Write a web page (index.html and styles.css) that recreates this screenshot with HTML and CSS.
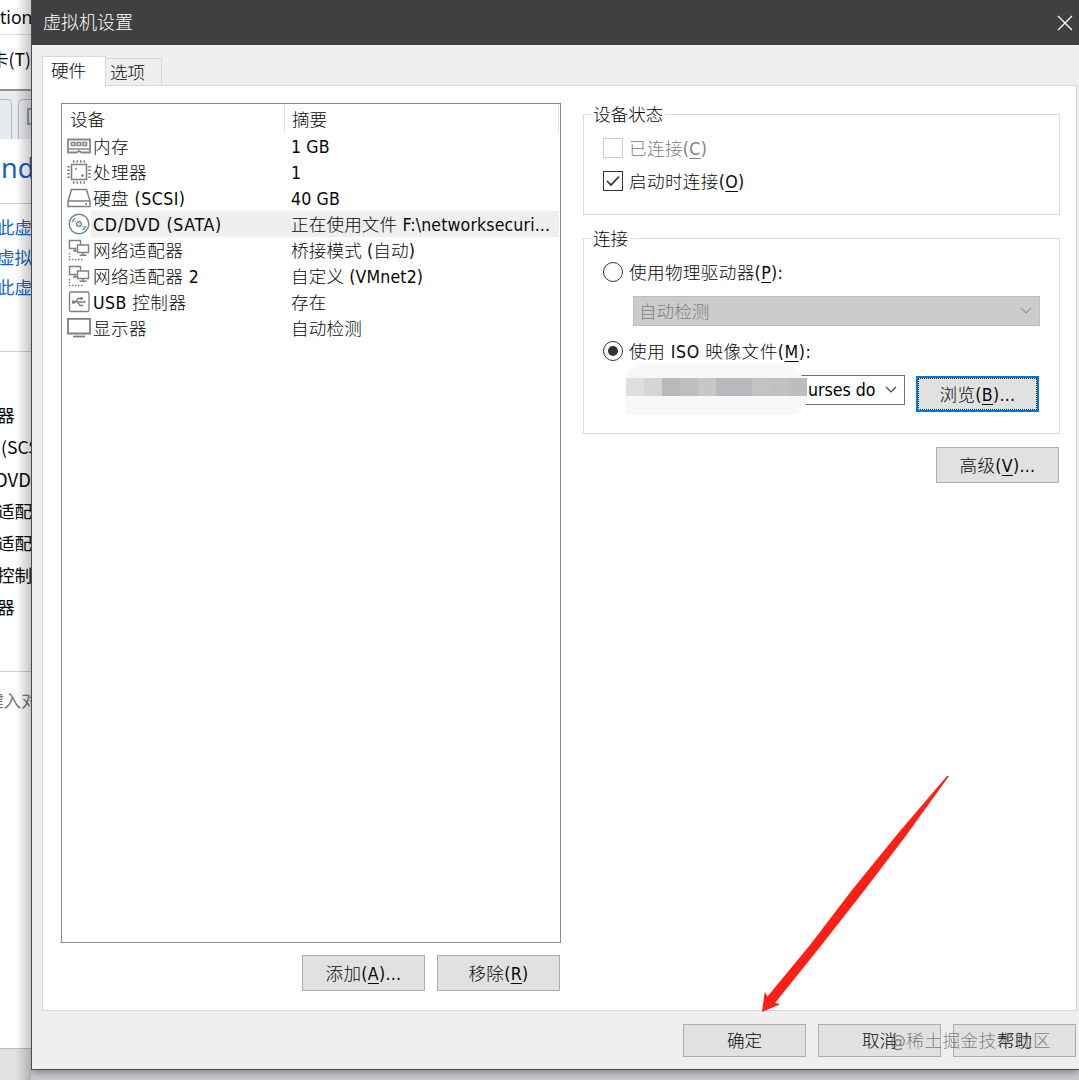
FILE: index.html
```html
<!DOCTYPE html>
<html lang="zh-CN">

<head>
  <meta charset="UTF-8" />
  <title>虚拟机设置</title>
  <link rel="stylesheet" href="styles.css">
</head>

<body>
  <!-- main window behind the dialog -->
  <div class="backdrop">
    <div class="bg-title">tion</div>
    <div class="bg-menu">卡(T)</div>
    <div class="bg-tabs"><i class="bg-tab first"></i><i class="bg-tab"><b></b></i></div>
    <div class="bg-name">nd</div>
    <div class="bg-links">
      <span>此虚</span>
      <span>虚拟</span>
      <span>此虚</span>
    </div>
    <div class="bg-devices">
      <span>器</span>
      <span class="lat">(SCS</span>
      <span class="dvd">DVD</span>
      <span>适配</span>
      <span>适配</span>
      <span>控制</span>
      <span>器</span>
    </div>
    <div class="bg-note"><span>键入对</span></div>
    <div class="bg-status"></div>
  </div>

  <div class="dialog">
    <div class="titlebar">
      <span>虚拟机设置</span>
      <svg width="16" height="16" viewBox="0 0 16 16"><path d="M1 1L15 15M15 1L1 15" stroke="#fff" stroke-width="1.3" /></svg>
    </div>

    <div class="tabs">
      <div class="tab active">硬件</div>
      <div class="tab">选项</div>
    </div>

    <div class="panel">
      <div class="left">
        <div class="list">
          <div class="head"><span>设备</span><span>摘要</span></div>
          <div class="row">
            <svg class="icon" viewBox="0 0 24 24" fill="none" stroke="#85888b" stroke-width="1.8"><path d="M1 5.500H23V18.500H14.500L12 17L9.500 18.500H1Z" /><path d="M1 15H23" stroke-width="1.500" /><path d="M4.500 8.500H8V11.500H4.500ZM10.300 8.500H13.700V11.500H10.300ZM16 8.500H19.500V11.500H16Z" stroke-width="1.600" /></svg>
            <span class="name">内存</span><span class="sum">1 GB</span>
          </div>
          <div class="row">
            <svg class="icon" viewBox="0 0 24 24" fill="none" stroke="#7d8082" stroke-width="1.600"><path d="M4.500 4.500H19.500V19.500H4.500Z" /><path d="M6 1.500H18M6 22.500H18" stroke-width="2.600" stroke-dasharray="1.500 2" /><path d="M1.500 6V18M22.500 6V18" stroke-width="2.600" stroke-dasharray="1.500 2" /><circle cx="9" cy="9" r="1" fill="#7d8082" stroke="none" /><circle cx="15.500" cy="15.500" r="1.300" fill="#7d8082" stroke="none" /></svg>
            <span class="name">处理器</span><span class="sum">1</span>
          </div>
          <div class="row">
            <svg class="icon" viewBox="0 0 24 24" fill="none" stroke="#7d8082" stroke-width="1.500"><path d="M4.500 3.500H19.500L23 15V20.500H1V15Z M1 15H23" /><path d="M18 18H20" /></svg>
            <span class="name">硬盘 (SCSI)</span><span class="sum">40 GB</span>
          </div>
          <div class="row selected">
            <svg class="icon" viewBox="0 0 24 24" fill="none" stroke="#6f8798" stroke-width="1.400"><circle cx="12" cy="12" r="9.800" /><circle cx="12" cy="12" r="2.400" /><circle cx="12" cy="12" r=".7" fill="#6f8798" stroke="none" /><path d="M5.300 10A7 7 0 0 1 8.500 6M18.700 14A7 7 0 0 1 15.500 18" /><path d="M7.800 10A4.600 4.600 0 0 1 9.300 8.200M16.200 14A4.600 4.600 0 0 1 14.700 15.800" stroke-width="1" /></svg>
            <span class="name">CD/DVD (SATA)</span><span class="sum">正在使用文件 F:\networksecuri...</span>
          </div>
          <div class="row">
            <svg class="icon" viewBox="0 0 24 24" fill="none" stroke="#7d8082" stroke-width="1.400"><path d="M9.500 10.500H2.500V2.500H13.500V6.500M6 13H10M8 10.500V13" /><path d="M10.500 7H21.500V14.500H10.500ZM16 14.500V17M12.500 17.200H19.500" /><path d="M2.500 15V21.500H16.500" stroke-dasharray="1.500 1.500" /></svg>
            <span class="name">网络适配器</span><span class="sum">桥接模式 (自动)</span>
          </div>
          <div class="row">
            <svg class="icon" viewBox="0 0 24 24" fill="none" stroke="#7d8082" stroke-width="1.400"><path d="M9.500 10.500H2.500V2.500H13.500V6.500M6 13H10M8 10.500V13" /><path d="M10.500 7H21.500V14.500H10.500ZM16 14.500V17M12.500 17.200H19.500" /><path d="M2.500 15V21.500H16.500" stroke-dasharray="1.500 1.500" /></svg>
            <span class="name">网络适配器 2</span><span class="sum">自定义 (VMnet2)</span>
          </div>
          <div class="row">
            <svg class="icon" viewBox="0 0 24 24" fill="none" stroke="#7d8082" stroke-width="1.300"><rect x="2.500" y="2" width="19.500" height="19.500" rx="1.500" /><path d="M6 12H18M8.500 12L11 8.500H14M10.500 12L13 15.500H15" /><circle cx="6.500" cy="12" r="1.200" fill="#7d8082" /><circle cx="14.500" cy="8.500" r=".8" fill="#7d8082" /><path d="M14.500 14.700H16V16.200H14.500ZM17 10.500L19 12L17 13.500Z" fill="#7d8082" stroke="none" /></svg>
            <span class="name">USB 控制器</span><span class="sum">存在</span>
          </div>
          <div class="row">
            <svg class="icon" viewBox="0 0 24 24" fill="none" stroke="#7d8082" stroke-width="1.800"><path d="M1 2.800H23V17.500H1Z" /><path d="M6 20.500H18" stroke-width="1.800" /></svg>
            <span class="name">显示器</span><span class="sum">自动检测</span>
          </div>
        </div>
        <div class="actions">
          <button>添加(<u>A</u>)...</button>
          <button>移除(<u>R</u>)</button>
        </div>
      </div>

      <div class="right">
        <fieldset class="status">
          <legend>设备状态</legend>
          <label class="option disabled"><i class="check"></i><span>已连接(<u>C</u>)</span></label>
          <label class="option"><i class="check"><svg width="18" height="18" viewBox="0 0 18 18" fill="none"><path d="M3 9L7 13L15 4.500" stroke="#333" stroke-width="1.700" /></svg></i><span>启动时连接(<u>O</u>)</span></label>
        </fieldset>

        <fieldset class="connection">
          <legend>连接</legend>
          <label class="option"><i class="radio"></i><span>使用物理驱动器(<u>P</u>):</span></label>
          <div class="combo off">
            <span>自动检测</span>
            <svg width="12" height="8" viewBox="0 0 12 8" fill="none"><path d="M1 1L6 6L11 1" stroke="#999" stroke-width="1.200" /></svg>
          </div>
          <label class="option iso"><i class="radio on"></i><span>使用 ISO 映像文件(<u>M</u>):</span></label>
          <div class="file">
            <div class="combo">
              <div class="mask"><div class="mosaic"></div></div>
              <span class="path">urses do</span>
              <svg width="12" height="8" viewBox="0 0 12 8" fill="none"><path d="M1 1L6 6L11 1" stroke="#444" stroke-width="1.200" /></svg>
            </div>
            <button class="focused">浏览(<u>B</u>)...</button>
          </div>
        </fieldset>

        <button class="advanced">高级(<u>V</u>)...</button>
      </div>
    </div>

    <div class="footer">
      <button>确定</button>
      <button>取消</button>
      <button>帮助</button>
    </div>
  </div>

  <svg class="arrow" width="190" height="240" viewBox="0 0 190 240"><path d="M187 1H189L145 62L100 121L60 172L15.200 227.700L20 229.300L2 237L4.700 217L7.500 221.500L50 170L92 115L140 56Z" fill="#ff2015" /></svg>
  <div class="watermark">@稀土掘金技术社区</div>
</body>

</html>
```
FILE: styles.css
```css
* {
  box-sizing: border-box;
}

body {
  margin: 0;
  width: 1079px;
  height: 1080px;
  overflow: hidden;
  position: relative;
  display: flex;
  background: #c9cbce;
  font-family: "DejaVu Sans Condensed", "Noto Sans CJK SC", sans-serif;
  font-size: 17.6px;
  font-weight: 300;
  line-height: 26px;
  color: #080808;
  white-space: nowrap;
}

.backdrop {
  width: 31px;
  height: 1080px;
  flex: none;
  overflow: hidden;
  background: #fff;
  position: relative;
  font-family: "Noto Sans CJK SC", sans-serif;
  font-weight: 400;
}

/* dialog shadow falling on the window behind */
.backdrop::after {
  content: "";
  position: absolute;
  top: 0;
  right: 0;
  width: 15px;
  height: 100%;
  background: linear-gradient(to right, rgba(0, 0, 0, 0), rgba(0, 0, 0, 0.22));
}

.bg-title {
  height: 35px;
  line-height: 35px;
  font-family: "Noto Sans", sans-serif;
  border-bottom: 1px solid #ddd;
}

.bg-menu {
  height: 54px;
  line-height: 48px;
  display: flex;
  justify-content: flex-end;
}

.bg-tabs {
  height: 50px;
  border-top: 2px solid #8c9093;
  background: #e8ebed;
  display: flex;
  gap: 6px;
  padding-top: 8px;
}

.bg-tab {
  width: 30px;
  flex: none;
  border: 1px solid #b4b8ba;
  border-bottom: 0;
  border-radius: 5px 5px 0 0;
  padding: 8px;
}

.bg-tab.first {
  width: 12px;
  border-left: 0;
  border-radius: 0 5px 0 0;
  padding: 0;
}

.bg-tab b {
  display: block;
  width: 16px;
  height: 17px;
  border: 2px solid #999;
}

.bg-name {
  height: 65px;
  line-height: 57px;
  padding-left: 1px;
  font-family: "Noto Sans", sans-serif;
  font-size: 27px;
  color: #1160bd;
  border-bottom: 1px solid #ccc;
}

.bg-links {
  height: 148px;
  padding-top: 8px;
  line-height: 30px;
  border-bottom: 1px solid #ccc;
  color: #1766bb;
}

.bg-links span,
.bg-devices span {
  display: block;
  margin-left: -3px;
}

.bg-devices {
  height: 320px;
  padding-top: 47px;
  line-height: 32px;
  border-bottom: 1px solid #ccc;
}

.bg-devices .lat {
  margin-left: 1px;
}

.bg-devices .dvd {
  margin-left: -5px;
  font-size: 18.5px;
}

.bg-note {
  height: 376px;
  padding-top: 15px;
  color: #777;
}

.bg-note span {
  margin-left: -14px;
}

.bg-status {
  height: 32px;
  background: #dfe1e3;
  border-top: 1px solid #bbb;
}

.dialog {
  flex: 1;
  height: 1070px;
  display: flex;
  flex-direction: column;
  background: #efefef;
  border-left: 1px solid #4a4a4a;
  border-bottom: 1px solid #4a4a4a;
  box-shadow: 0 2px 9px rgba(0, 0, 0, 0.4);
}

.titlebar {
  height: 45px;
  flex: none;
  display: flex;
  justify-content: space-between;
  align-items: center;
  padding: 0 6px 0 11px;
  background: #404040;
  color: #fff;
  font-size: 18px;
  font-family: "Noto Sans CJK SC", sans-serif;
}

.titlebar span {
  padding-bottom: 3px;
}

.tabs {
  height: 41px;
  flex: none;
  display: flex;
  align-items: flex-end;
  padding-left: 10px;
  position: relative;
  z-index: 1;
  margin-bottom: -1px;
}

.tab {
  width: 56px;
  height: 28px;
  padding: 1px 0 0 4px;
  border: 1px solid #d9d9d9;
  border-left: 0;
}

.tab.active {
  width: 64px;
  height: 31px;
  padding: 1px 0 0 8px;
  margin-bottom: -1px;
  background: #fff;
  border-left: 1px solid #d9d9d9;
  border-bottom: 0;
}

.panel {
  margin: 0 2px 0 10px;
  height: 926px;
  display: flex;
  gap: 22px;
  padding: 17px 16px 0 18px;
  background: #fff;
  border: 1px solid #d9d9d9;
}

.left {
  width: 500px;
  flex: none;
}

.list {
  height: 840px;
  border: 1px solid #828790;
}

.head {
  height: 29px;
  line-height: 33px;
  display: flex;
  margin-right: 1px;
  border-right: 1px solid #e5e5e5;
}

.head span:first-child {
  width: 223px;
  padding-left: 8px;
  border-right: 1px solid #e5e5e5;
}

.head span:last-child {
  padding-left: 7px;
}

.row {
  height: 26px;
  display: flex;
  align-items: center;
  padding-left: 5px;
}

.icon {
  width: 24px;
  height: 24px;
  flex: none;
}

.name {
  width: 193px;
  padding-left: 2px;
  flex: none;
  letter-spacing: 0.45px;
}

.name,
.sum {
  height: 26px;
  line-height: 28px;
}

.sum {
  flex: 1;
  padding-left: 7px;
  margin-right: 1px;
  letter-spacing: 0.12px;
}

.selected .name,
.selected .sum {
  background: #efefef;
}

.selected .name {
  letter-spacing: 0.7px;
}

.actions {
  display: flex;
  justify-content: flex-end;
  gap: 12px;
  padding: 12px 1px 0 0;
}

button {
  width: 123px;
  height: 36px;
  padding: 2px 0 0;
  flex: none;
  border: 1px solid #adadad;
  background: #e1e1e1;
  color: #080808;
  font: inherit;
  letter-spacing: 0.3px;
}

u {
  text-decoration-thickness: 1px;
  text-underline-offset: 3px;
}

.right {
  width: 477px;
  flex: none;
  display: flex;
  flex-direction: column;
}

fieldset {
  margin: 0;
  min-width: 0;
  border: 1px solid #dcdcdc;
}

legend {
  height: 22px;
  padding: 0 2px;
  line-height: 24px;
}

.status {
  height: 112px;
  padding: 6px 19px 0 7px;
}

.connection {
  height: 207px;
  margin-top: 12px;
  padding: 6px 19px 0 7px;
}

.option {
  height: 33px;
  display: flex;
  align-items: center;
  padding-left: 12px;
  letter-spacing: 0.35px;
}

.option span {
  padding-top: 2px;
}

.iso {
  letter-spacing: 0.55px;
}

.disabled {
  color: #808080;
}

.check,
.radio {
  width: 20px;
  height: 20px;
  margin-right: 6px;
  border: 1px solid #333;
  display: flex;
  flex: none;
}

.disabled .check {
  border-color: #ccc;
}

.radio {
  border-radius: 50%;
  padding: 4px;
}

.radio.on::before {
  content: "";
  width: 10px;
  height: 10px;
  border-radius: 50%;
  background: #333;
}

.combo {
  width: 272px;
  height: 30px;
  display: flex;
  align-items: center;
  justify-content: space-between;
  border: 1px solid #707070;
  padding: 0 7px 0 5px;
  position: relative;
}

.combo.off {
  width: 407px;
  margin: 8px 0 8px 42px;
  color: #808080;
  background: #ccc;
  border-color: #bfbfbf;
}

.combo.off span {
  padding-top: 2px;
}

.path {
  margin-left: 169px;
  width: 68px;
  overflow: hidden;
  color: #000;
}

.file {
  display: flex;
  gap: 11px;
  padding: 8px 0 0 42px;
}

.file button {
  margin-top: 1px;
}

button.focused {
  border: 2px solid #0078d7;
  outline: 1px dotted #222;
  outline-offset: -3px;
}

/* censored part of the path */
.mask {
  position: absolute;
  left: -8px;
  top: -12px;
  width: 181px;
  height: 51px;
  padding-top: 14px;
  background: #f7f7f7;
  border-radius: 16px 28px 18px 3px;
}

.mosaic {
  height: 18px;
  background: linear-gradient(to right, #dededc 0 18px, #d5d5d3 18px 36px, #b8baba 36px 54px, #bebfbf 54px 72px, #c7c7c6 72px 90px, #b8b9bb 90px 108px, #b7b9bf 108px 126px, #c3c3c1 126px 145px, #c1c1c0 145px 163px, #bcbdbd 163px);
}

.advanced {
  margin: 13px 1px 0 0;
  align-self: flex-end;
}

.footer {
  display: flex;
  justify-content: flex-end;
  gap: 12px;
  padding: 13px 3px 0 0;
}

.footer button {
  height: 33px;
  padding: 0;
  letter-spacing: 0;
}

.arrow {
  position: absolute;
  left: 760px;
  top: 775px;
}

.watermark {
  position: absolute;
  left: 890px;
  top: 1028px;
  letter-spacing: 0.5px;
  color: rgba(90, 90, 90, 0.75);
}
```
